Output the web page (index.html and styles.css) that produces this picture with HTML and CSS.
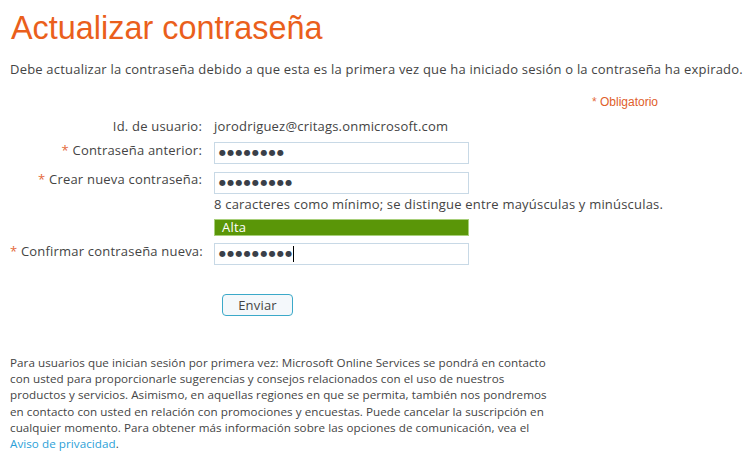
FILE: index.html
```html
<!DOCTYPE html>
<html lang="es">
<head>
<meta charset="utf-8">
<title>Actualizar contraseña</title>
<link rel="stylesheet" href="styles.css">
</head>
<body>
<div class="page">
  <h1 class="title">Actualizar contraseña</h1>
  <p class="intro">Debe actualizar la contraseña debido a que esta es la primera vez que ha iniciado sesión o la contraseña ha expirado.</p>
  <div class="required-note"><span class="star">*</span> Obligatorio</div>
  <div class="form">
    <div class="label">Id. de usuario:</div>
    <div class="value user">jorodriguez@critags.onmicrosoft.com</div>

    <div class="label"><span class="star">*</span> Contraseña anterior:</div>
    <div class="value"><div class="field f1">●●●●●●●●</div></div>

    <div class="label"><span class="star">*</span> Crear nueva contraseña:</div>
    <div class="value"><div class="field f2">●●●●●●●●●</div></div>

    <div class="label"></div>
    <div class="value hint">8 caracteres como mínimo; se distingue entre mayúsculas y minúsculas.</div>

    <div class="label"></div>
    <div class="value"><div class="strength">Alta</div></div>

    <div class="label"><span class="star">*</span> Confirmar contraseña nueva:</div>
    <div class="value"><div class="field f3">●●●●●●●●●<span class="caret"></span></div></div>

    <div class="label"></div>
    <div class="value actions"><button class="btn" type="button">Enviar</button></div>
  </div>
  <p class="legal">Para usuarios que inician sesión por primera vez: Microsoft Online Services se pondrá en contacto<br>con usted para proporcionarle sugerencias y consejos relacionados con el uso de nuestros<br>productos y servicios. Asimismo, en aquellas regiones en que se permita, también nos pondremos<br>en contacto con usted en relación con promociones y encuestas. Puede cancelar la suscripción en<br>cualquier momento. Para obtener más información sobre las opciones de comunicación, vea el<br><a class="link" href="#">Aviso de privacidad</a>.</p>
</div>
</body>
</html>
```
FILE: styles.css
```css
* { box-sizing: border-box; }
html, body { margin: 0; padding: 0; background: #fff; }
body {
  font-family: "Open Sans", "Noto Sans", sans-serif;
  color: #444;
  font-size: 13px;
  letter-spacing: 0.2px;
}
.page { padding: 0 0 0 10px; width: 748px; }
.title {
  margin: 0 0 0 1px;
  padding-top: 8px;
  font-family: "Liberation Sans", Arial, sans-serif;
  font-weight: normal;
  font-size: 32.4px;
  line-height: 40px;
  letter-spacing: 0;
  color: #ea5f1c;
}
.intro {
  margin: 12px 0 0 0;
  line-height: 18px;
  white-space: nowrap;
}
.required-note {
  margin-top: 16px;
  padding-left: 582px;
  font-family: "Liberation Sans", Arial, sans-serif;
  font-size: 12px;
  letter-spacing: 0;
  line-height: 16px;
  color: #e0602a;
}
.star { color: #e46a3a; }
.form {
  display: grid;
  grid-template-columns: 192px 1fr;
  column-gap: 12px;
  margin-top: 7px;
  align-items: center;
}
.label {
  text-align: right;
  white-space: nowrap;
}
.user { line-height: 18px; }
.field {
  width: 255px;
  height: 22px;
  border: 1px solid #c8d9e6;
  padding: 0 0 0 4px;
  font-family: "DejaVu Sans", sans-serif;
  font-size: 8px;
  letter-spacing: 1.3px;
  line-height: 20px;
  color: #3a3f48;
  display: flex;
  align-items: center;
}
.f1 { margin-top: 7px; }
.f2 { margin-top: 8px; }
.f3 { margin-top: 7px; }
.caret {
  display: inline-block;
  width: 1px;
  height: 16px;
  background: #000;
  margin-left: -1px;
}
.hint { line-height: 18px; margin-top: 1px; white-space: nowrap; }
.strength {
  width: 255px;
  height: 17px;
  margin-top: 6px;
  background: #5a9608;
  border: 1px solid #a8cf7a;
  color: #fff;
  padding-left: 7px;
  line-height: 15px;
}
.actions { padding-left: 8px; margin-top: 29px; }
.btn {
  width: 71px;
  height: 22px;
  border: 1px solid #3ba9c9;
  border-radius: 4px;
  background: #f4f8fb;
  color: #444;
  font-family: "Open Sans", "Noto Sans", sans-serif;
  font-size: 13px;
  letter-spacing: 0.2px;
  padding: 0;
  line-height: 20px;
}
.legal {
  margin: 39px 0 0 0;
  font-size: 11.65px;
  letter-spacing: 0.05px;
  line-height: 16.2px;
  white-space: nowrap;
}
.link { color: #2b9fd8; text-decoration: none; }
```
